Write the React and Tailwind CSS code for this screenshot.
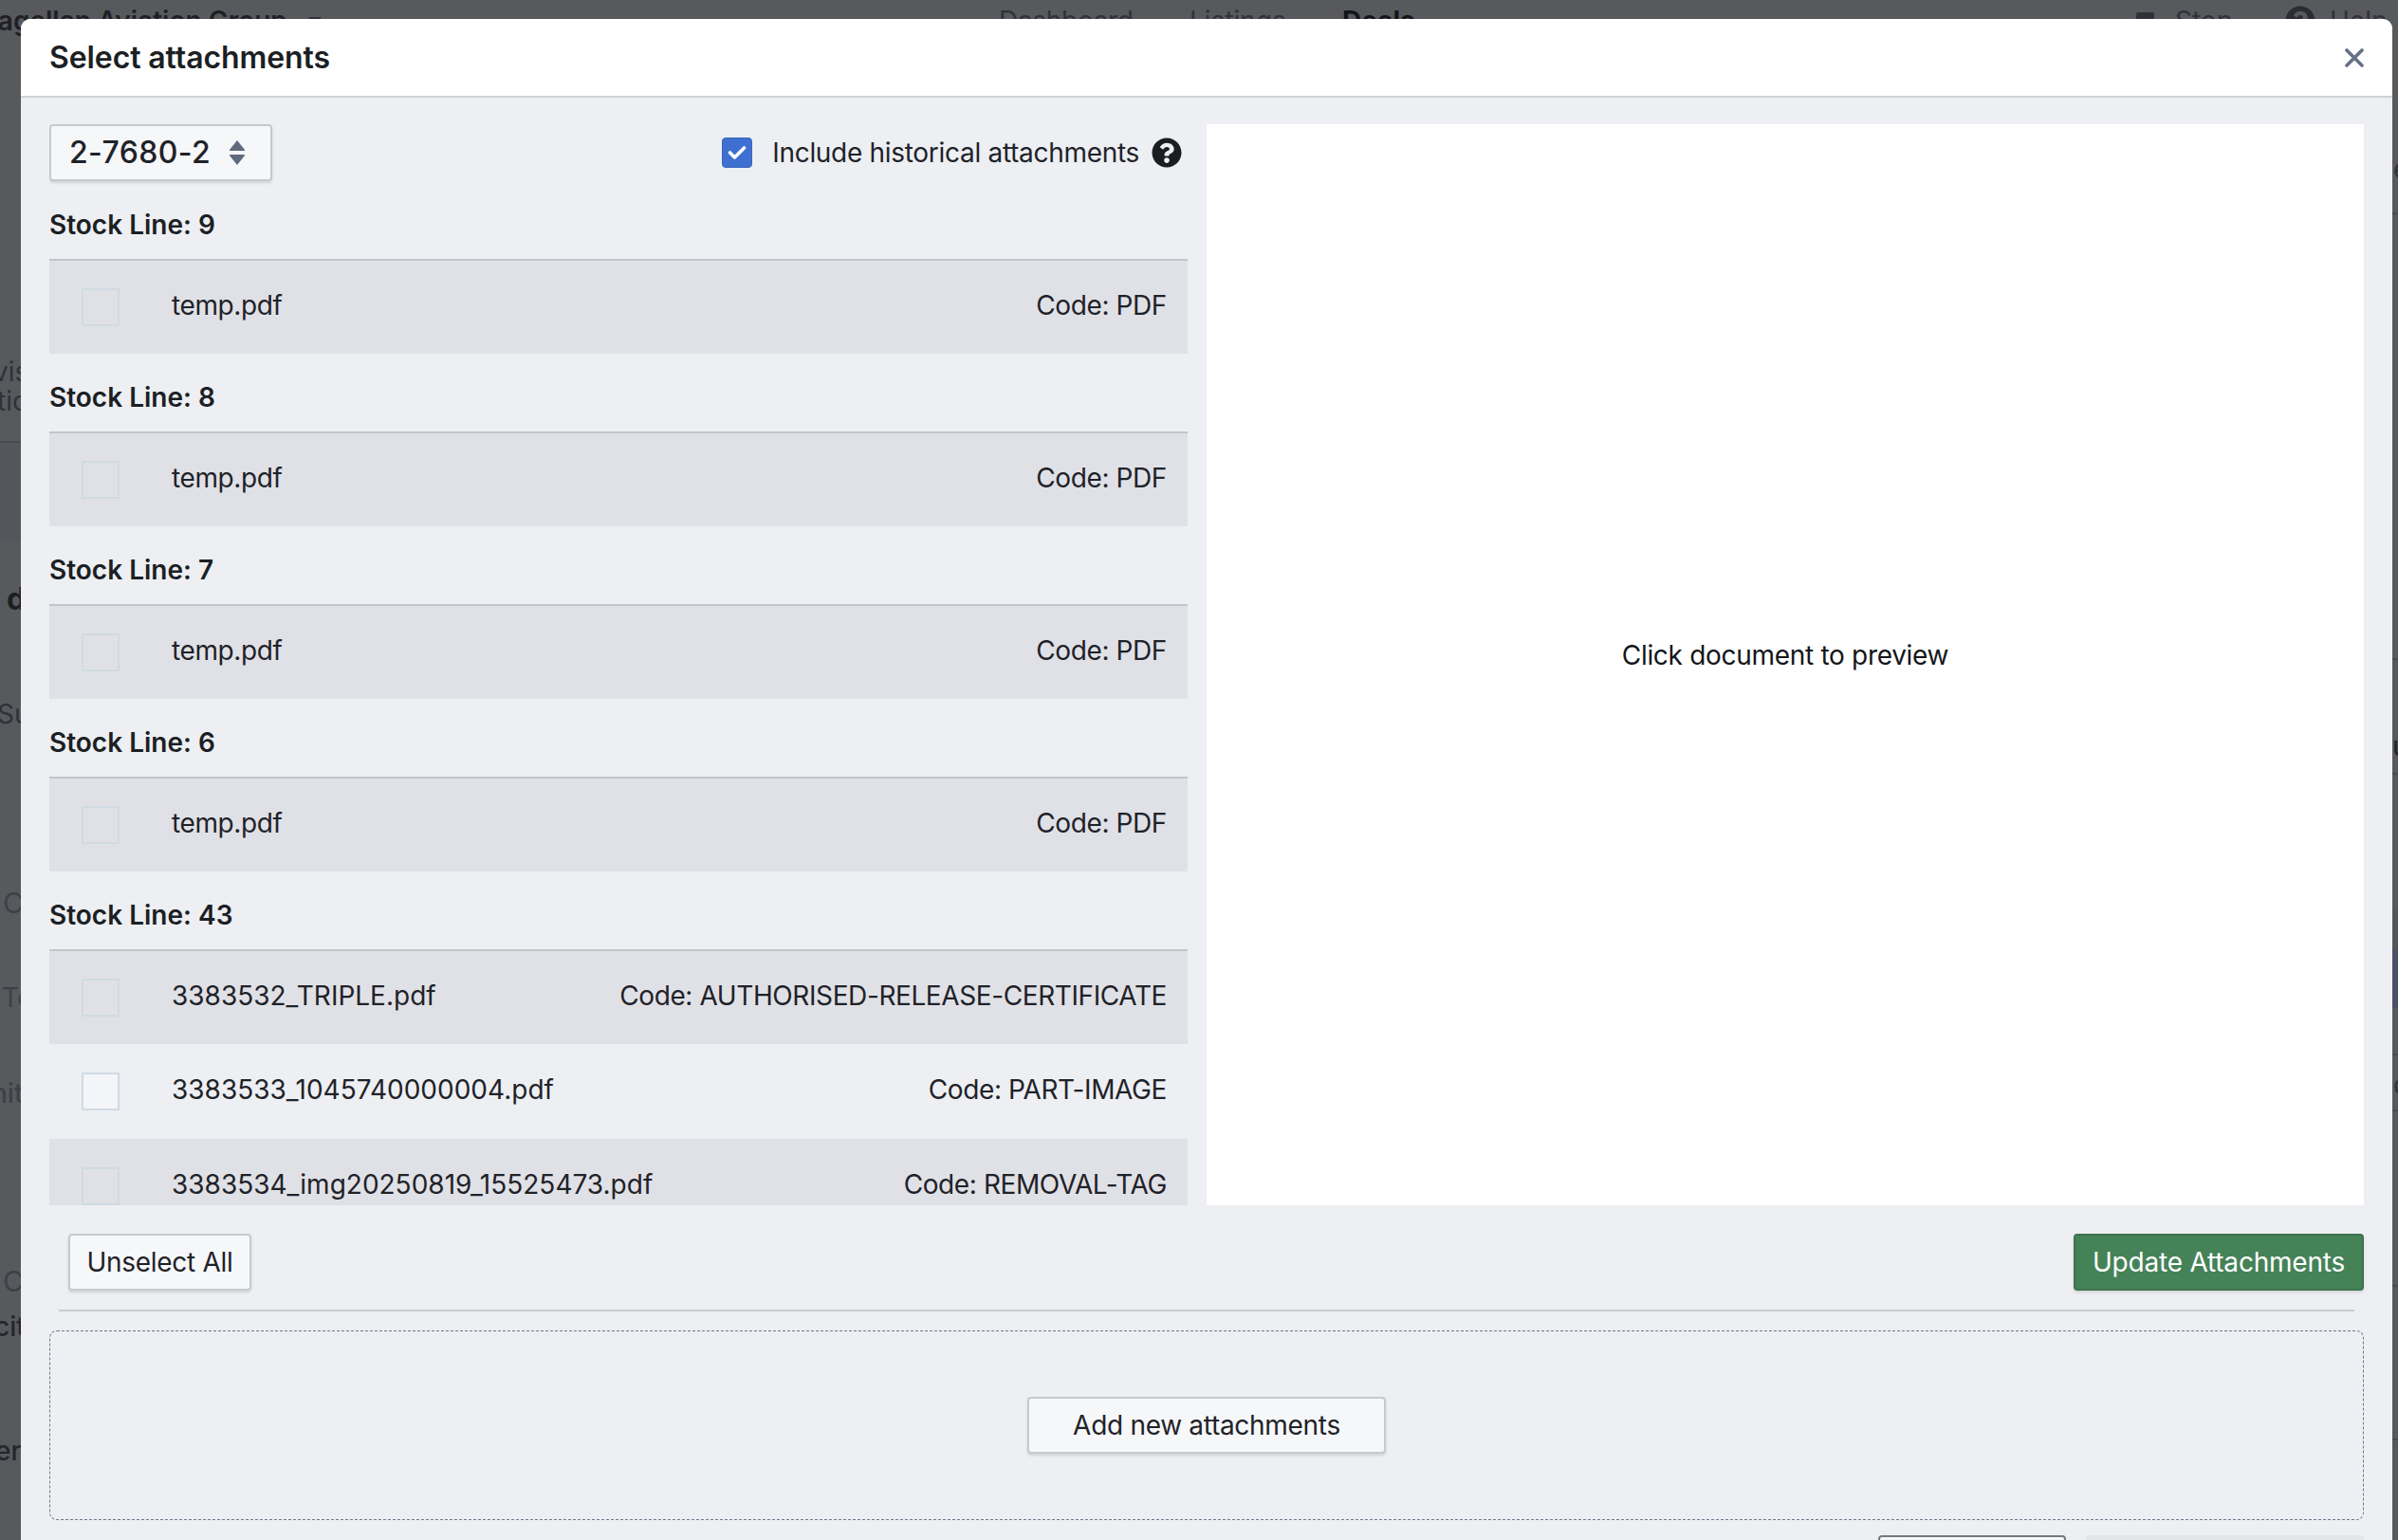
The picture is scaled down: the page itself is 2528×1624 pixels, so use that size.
import React from 'react';
import { FaQuestionCircle } from 'react-icons/fa';

const sections = [
  { line: '9', files: [{ name: 'temp.pdf', code: 'PDF', tight: true }] },
  { line: '8', files: [{ name: 'temp.pdf', code: 'PDF', tight: true }] },
  { line: '7', files: [{ name: 'temp.pdf', code: 'PDF', tight: true }] },
  { line: '6', files: [{ name: 'temp.pdf', code: 'PDF', tight: true }] },
  {
    line: '43',
    files: [
      { name: '3383532_TRIPLE.pdf', code: 'AUTHORISED-RELEASE-CERTIFICATE' },
      { name: '3383533_1045740000004.pdf', code: 'PART-IMAGE' },
      { name: '3383534_img20250819_15525473.pdf', code: 'REMOVAL-TAG' },
    ],
  },
];

// what shows of the dimmed page to the left of the modal
const PageLeftEdge = () => (
  <div className="w-[22px] shrink-0 overflow-visible whitespace-nowrap text-[28px] leading-[40px]">
    <div className="h-[377px]" />
    <div className="h-[31px] -ml-[7px] leading-[31px] text-[#2f3238]">vis</div>
    <div className="h-[31px] -ml-[3px] leading-[31px] text-[#2f3238]">tic</div>
    <div className="h-[28px] w-[22px] border-b-2 border-[#4a4c50]" />
    <div className="h-[103px] w-[22px] bg-[#53565a]" />
    <div className="h-[42px]" />
    <div className="h-[40px] pl-[7px] text-[32px] font-bold text-[#1c1e22]">d</div>
    <div className="h-[81px]" />
    <div className="h-[40px] -ml-[3px] text-[#2f3238]">Su</div>
    <div className="h-[159px]" />
    <div className="h-[40px] pl-[3px] text-[30px] text-[#3c4148]">C</div>
    <div className="h-[60px]" />
    <div className="h-[40px] pl-[2px] text-[#3c4148]">Te</div>
    <div className="h-[61px]" />
    <div className="h-[40px] -ml-[9px] font-medium text-[#3c4148]">nit</div>
    <div className="h-[158px]" />
    <div className="h-[40px] pl-[3px] text-[30px] text-[#3c4148]">C</div>
    <div className="h-[8px]" />
    <div className="h-[40px] -ml-[6px] font-medium text-[#24262b]">cit</div>
    <div className="h-[91px]" />
    <div className="h-[40px] -ml-[5px] font-medium text-[#24262b]">er</div>
  </div>
);

const PageRightEdge = () => (
  <div className="w-[6px] shrink-0 overflow-hidden whitespace-nowrap text-[28px] leading-[40px]">
    <div className="h-[158px]" />
    <div className="h-[40px] pl-[1px] text-[#2f3238]">e</div>
    <div className="h-[28px] border-b-2 border-[#4a4c50]" />
    <div className="h-[470px] border-b-2 border-[#4a4c50]" />
    <div className="h-[71px]" />
    <div className="h-[40px] font-medium text-[#24262b]">u</div>
    <div className="h-[10px] border-b-2 border-[#4a4c50]" />
    <div className="h-[141px]" />
    <div className="h-[42px] bg-[#53565a]" />
    <div className="h-[63px] bg-[#4a5163]" />
    <div className="h-[50px] border-b-2 border-[#4a4c50]" />
    <div className="h-[59px] border-b-2 border-[#4a4c50] pl-[1px] leading-[62px] text-[#2f3238]">c</div>
    <div className="h-[185px] border-b-2 border-[#4a4c50]" />
    <div className="h-[162px] border-b-2 border-[#4a4c50]" />
  </div>
);

const PageTopBar = () => (
  <div className="flex h-[44px] items-center whitespace-nowrap text-[28px] text-[#2f3238]">
    <span className="-ml-[28px] w-[340px] font-semibold text-[#1e2025]">Magellan Aviation Group</span>
    <span className="ml-[13px] h-0 w-0 border-x-[7px] border-t-[8px] border-x-transparent border-t-[#2f3238]" />
    <span className="ml-[714px] w-[201px] tracking-[-0.3px]">Dashboard</span>
    <span className="w-[161px]">Listings</span>
    <span className="w-[837px] font-bold text-[#14161a]">Deals</span>
    <span className="h-[19px] w-[19px] rounded-[2px] bg-[#2f3238]" />
    <span className="ml-[22px] w-[116px]">Stop</span>
    <FaQuestionCircle className="h-[32px] w-[32px] shrink-0 text-[#2a2d33]" />
    <span className="ml-[15px]">Help</span>
  </div>
);

const SoftButton = ({ className, children }) => (
  <button className={`flex h-[60px] items-center justify-center rounded-[4px] border-2 border-[#c8c9cd] bg-[#f6f7f9] text-[28px] tracking-[-0.3px] text-[#1f2228] shadow-[0_2px_3px_rgba(0,0,0,0.12)] ${className}`}>
    {children}
  </button>
);

const FileRow = ({ file, shaded, ruled }) => (
  <div className={`flex h-[100px] shrink-0 items-center justify-between pl-[34px] pr-[22px] text-[28px] text-[#1f2228] ${shaded ? 'bg-[#e0e1e6]' : ''} ${ruled ? 'border-t-2 border-[#c3c5ca]' : ''}`}>
    <div className="flex items-center gap-[55px]">
      <span className={`h-[40px] w-[40px] border-2 border-[#cfdbe3] ${shaded ? '' : 'bg-[#f3f5f8]'}`} />
      <span className={`-mt-[4px] ${file.tight ? 'tracking-[-0.4px]' : ''}`}>{file.name}</span>
    </div>
    <span className="-mt-[4px] tracking-[-0.4px]">Code: {file.code}</span>
  </div>
);

const App = () => {
  return (
    <div className="relative flex h-[1624px] w-[2528px] justify-between overflow-hidden bg-[#57595d] font-['Inter',sans-serif]">
      <PageLeftEdge />
      <PageRightEdge />
      <div className="absolute left-0 top-0 w-full">
        <PageTopBar />
      </div>

      {/* Modal */}
      <div className="absolute left-[22px] top-[20px] h-[1640px] w-[2500px] overflow-hidden rounded-t-[10px] bg-[#edeff3]">
        <div className="flex h-[83px] items-center justify-between border-b-2 border-[#cfd1d6] bg-white pl-[30px] pr-[30px]">
          <h2 className="text-[32px] font-semibold tracking-[-0.1px] text-[#1c1f24]">Select attachments</h2>
          <svg width="20" height="20" viewBox="0 0 20 20" fill="none" stroke="#667085" strokeWidth="3.6" strokeLinecap="round">
            <path d="M2 2 L18 18 M18 2 L2 18" />
          </svg>
        </div>

        <div className="px-[30px] pt-[28px]">
          <div className="flex gap-[20px]">
            {/* Attachment list */}
            <div className="h-[1140px] w-[1200px] shrink-0 overflow-hidden">
              <div className="flex h-[60px] items-center justify-between pr-[6px]">
                <div className="flex h-[60px] w-[235px] items-center rounded-[4px] border-2 border-[#c8c9cd] bg-[#f6f7f9] pl-[19px] shadow-[0_2px_3px_rgba(0,0,0,0.12)]">
                  <span className="text-[32px] font-medium tracking-[0.4px] text-[#1f2228]">2-7680-2</span>
                  <svg className="ml-[19px]" width="18" height="26" viewBox="0 0 18 26" fill="#5f6b7d">
                    <path d="M9 0 L17 10 Q18 11 16 11 L2 11 Q0 11 1 10 Z" />
                    <path d="M9 26 L17 16 Q18 15 16 15 L2 15 Q0 15 1 16 Z" />
                  </svg>
                </div>
                <div className="flex items-center">
                  <span className="flex h-[32px] w-[32px] items-center justify-center rounded-[4px] border border-[#3a66bf] bg-[#3f6fd1]">
                    <svg width="20" height="16" viewBox="0 0 20 16" fill="none" stroke="white" strokeWidth="3.6" strokeLinecap="round" strokeLinejoin="round">
                      <path d="M2.5 8 L7.5 13 L17.5 3" />
                    </svg>
                  </span>
                  <span className="ml-[21px] text-[28px] tracking-[-0.3px] text-[#1f2228]">Include historical attachments</span>
                  <FaQuestionCircle className="ml-[13px] h-[32px] w-[32px] text-[#1b1d21]" />
                </div>
              </div>

              {sections.map((section) => (
                <div key={section.line}>
                  <div className="h-[82px] pt-[28px] text-[28px] font-semibold leading-[36px] text-[#1c1f24]">
                    Stock Line: {section.line}
                  </div>
                  {section.files.map((file, i) => (
                    <FileRow key={file.name} file={file} shaded={i % 2 === 0} ruled={i === 0} />
                  ))}
                </div>
              ))}
            </div>

            {/* Preview */}
            <div className="flex h-[1140px] flex-1 items-center justify-center bg-white pb-[21px]">
              <span className="text-[28px] tracking-[-0.3px] text-[#14161a]">Click document to preview</span>
            </div>
          </div>

          <div className="mt-[30px] flex justify-between pl-[20px]">
            <SoftButton className="w-[193px]">Unselect All</SoftButton>
            <button className="flex h-[60px] w-[306px] items-center justify-center rounded-[4px] border-2 border-[#3d7350] bg-[#458257] text-[28px] tracking-[-0.2px] text-white shadow-[0_2px_3px_rgba(0,0,0,0.12)]">
              Update Attachments
            </button>
          </div>

          <div className="mx-[10px] mt-[20px] h-[2px] bg-[#cbccd1]" />

          <div className="mt-[20px] flex h-[200px] items-center justify-center rounded-[8px] border border-dashed border-[#6b7a8a]">
            <SoftButton className="w-[378px]">Add new attachments</SoftButton>
          </div>

          <div className="mt-[16px] flex justify-end gap-[21px]">
            <div className="h-[60px] w-[198px] rounded-[4px] border-2 border-[#77797d] bg-[#f6f7f9]" />
            <div className="h-[60px] w-[293px] rounded-[4px] bg-[#e3e6e9]" />
          </div>
        </div>
      </div>
    </div>
  );
};

export default App;
